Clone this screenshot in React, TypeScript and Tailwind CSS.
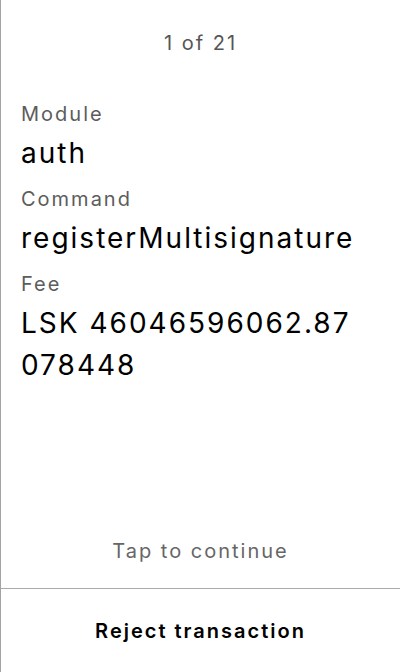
import React from 'react';

const fields = [
  { label: 'Module', value: 'auth' },
  { label: 'Command', value: 'registerMultisignature' },
  { label: 'Fee', value: 'LSK 46046596062.87078448' },
];

export default function App() {
  return (
    <div
      className="flex h-screen w-full flex-col border-l border-[#a3a3a3] bg-white tracking-[2px] text-black"
      style={{ fontFamily: 'Inter, "Noto Sans", sans-serif' }}
    >
      <div className="flex flex-1 flex-col">
        <div className="pt-[29px] text-center text-xl leading-7 text-[#555555]">1 of 21</div>
        <div className="mt-[43px] flex flex-col gap-[11px] pl-5 pr-[38px]">
          {fields.map((f) => (
            <div key={f.label} className="flex flex-col">
              <span className="text-xl leading-7 text-[#5c5c5c]">{f.label}</span>
              <span className="mt-1 break-all text-[28px] leading-[42px]">{f.value}</span>
            </div>
          ))}
        </div>
      </div>
      <div className="pb-[23px] text-center text-xl leading-7 text-[#666666]">Tap to continue</div>
      <button className="flex h-[84px] items-center justify-center border-t border-[#aaaaaa] text-xl font-semibold leading-7 tracking-[2px]">
        Reject transaction
      </button>
    </div>
  );
}
